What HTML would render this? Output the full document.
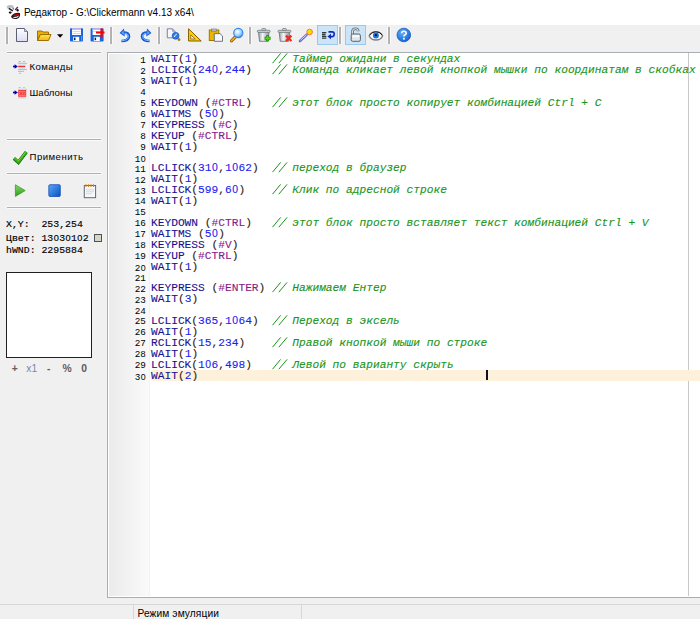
<!DOCTYPE html>
<html><head><meta charset="utf-8">
<style>
html,body{margin:0;padding:0}
body{width:700px;height:619px;overflow:hidden;background:#f0f0f0;position:relative;font-family:"Liberation Sans",sans-serif;}
.abs{position:absolute}
#title{position:absolute;left:0;top:0;width:700px;height:25px;background:#fff}
#ttext{position:absolute;left:24px;top:7.4px;font-size:10px;color:#000;white-space:nowrap;line-height:12px}
.sep{position:absolute;top:27px;width:2px;height:17px;background:#b2b2b2;box-shadow:1px 0 0 #fafafa,-1px 0 0 #fafafa}
.tb{position:absolute;top:25px;height:20px}
.pressed{background:#cce4f7;border:1px solid #99c9ef;box-sizing:border-box}
.hsep{position:absolute;left:7px;width:94px;height:1px;background:#b0b0b0;box-shadow:0 1px 0 #fafafa,0 -1px 0 #fafafa}
.lbl{position:absolute;font-size:9.6px;color:#000;white-space:nowrap;line-height:12px;letter-spacing:.3px}
.info{position:absolute;left:6px;font-family:"Liberation Mono",monospace;font-size:9.85px;color:#000;white-space:pre;line-height:12px;-webkit-text-stroke:.15px #000}
#editor{position:absolute;left:107px;top:52px;width:600px;height:546px;border:1px solid #a9adb4;border-right:0;box-sizing:border-box;background:#fff;overflow:hidden}
#gutter{position:absolute;left:109px;top:54px;width:40px;height:542px;background:linear-gradient(to right,#ebebeb,#fafafa)}
#gline{position:absolute;left:149px;top:54px;width:1px;height:542px;background:#f2f2f2}
#rmargin{position:absolute;left:688px;top:53px;width:1px;height:543px;background:#c8c8c8}
.ln{position:absolute;left:151.0px;-webkit-text-stroke:.1px currentColor;font-family:"Liberation Mono",monospace;font-size:11.217px;line-height:10.91px;height:10.91px;white-space:pre;color:#000}
.ln i{font-style:normal}
.ln i.c{color:#1a1090}
.ln i.p{color:#302010}
.ln i.n{color:#2020f0}
.ln i.k{color:#8a1a8a}
.ln b.z{font-weight:normal;display:inline-block;width:6.73px;text-align:center;font-family:"Liberation Sans",sans-serif;font-size:10.4px}
.ln i.tr{color:transparent;-webkit-text-stroke:0}
.ln i.m{color:#189418;font-style:italic}
.num{position:absolute;left:100px;width:45.9px;text-align:right;font-family:"Liberation Mono",monospace;font-size:9.3px;line-height:10.91px;color:#000;margin-top:1.3px}
.num b.z{font-weight:normal;display:inline-block;width:5.58px;text-align:center;font-family:"Liberation Sans",sans-serif;font-size:8.8px}
#hl{position:absolute;left:151px;top:370px;width:549px;height:11px;background:#fef1db}
#caret{position:absolute;left:486px;top:370px;width:2px;height:10px;background:#101020}
#status{position:absolute;left:0;top:604px;width:700px;height:15px;border-top:1px solid #d7d7d7;box-sizing:border-box;background:#f0f0f0}
#stdiv{position:absolute;left:133px;top:605px;width:1px;height:14px;background:#d7d7d7}
#sttext{position:absolute;left:137.5px;top:607.5px;font-size:10.2px;line-height:12px;white-space:nowrap;letter-spacing:.1px}
svg{position:absolute;overflow:visible}
.info b.z0{font-weight:normal;display:inline-block;width:5.91px;text-align:center;font-family:"Liberation Sans",sans-serif;font-size:9.2px}
.zl{position:absolute;top:363.2px;font-size:10.3px;line-height:11px;font-weight:bold;white-space:nowrap}
</style></head><body>
<div id="title"></div>
<div id="ttext">Редактор - G:\Clickermann v4.13 x64\</div>

<!-- toolbar separators -->
<div class="sep" style="left:6px"></div>
<div class="sep" style="left:110px"></div>
<div class="sep" style="left:158px"></div>
<div class="sep" style="left:249px"></div>
<div class="sep" style="left:339px"></div>
<div class="sep" style="left:388px"></div>
<div class="tb pressed" style="left:317px;width:21px"></div>
<div class="tb pressed" style="left:345px;width:21px"></div>

<!-- left panel -->
<div class="hsep" style="top:52px"></div>
<div class="lbl" style="left:29.6px;top:61px;letter-spacing:.38px">Команды</div>
<div class="lbl" style="left:29.4px;top:87px;letter-spacing:.08px">Шаблоны</div>
<div class="hsep" style="top:139px"></div>
<div class="lbl" style="left:29.5px;top:151px;letter-spacing:.48px">Применить</div>
<div class="hsep" style="top:173px"></div>
<div class="hsep" style="top:207px"></div>
<div class="info" style="top:219px">X,Y:  253,254</div>
<div class="info" style="top:232px">Цвет: 13<b class="z0">0</b>3<b class="z0">0</b>1<b class="z0">0</b>2</div>
<div class="info" style="top:245px">hWND: 2295884</div>
<div class="abs" style="left:94px;top:234px;width:8px;height:8px;border:1px solid #505050;box-sizing:border-box;background:#d8d4c8"></div>
<div class="abs" style="left:6px;top:272px;width:86px;height:86px;border:1px solid #202020;box-sizing:border-box;background:#fff"></div>
<div class="zl" style="left:11.8px;color:#606060">+</div>
<div class="zl" style="left:26.3px;color:#7888a8;font-weight:normal">x1</div>
<div class="zl" style="left:47px;color:#606060">-</div>
<div class="zl" style="left:62.6px;color:#606060">%</div>
<div class="zl" style="left:81.3px;color:#585858">0</div>

<!-- editor -->
<div id="editor"></div>
<div id="gutter"></div>
<div id="gline"></div>
<div id="rmargin"></div>
<div id="hl"></div>
<svg class="sl" style="left:272.14px;top:53.30px" width="18" height="12"><path d="M0.5 10.2 L8.6 0.4 M6.8 10.2 L15.1 0.4" stroke="#189418" stroke-width="1" fill="none"/></svg>
<div class="ln" style="top:54.30px"><i class="c">WAIT</i><i class="p">(</i><i class="n">1</i><i class="p">)</i>           <i class="m"><i class="tr">//</i> Таймер ожидани в секундах</i></div>
<div class="num" style="top:54.30px">1</div>
<svg class="sl" style="left:272.14px;top:64.21px" width="18" height="12"><path d="M0.5 10.2 L8.6 0.4 M6.8 10.2 L15.1 0.4" stroke="#189418" stroke-width="1" fill="none"/></svg>
<div class="ln" style="top:65.21px"><i class="c">LCLICK</i><i class="p">(</i><i class="n">24<b class="z">0</b></i><i class="p">,</i><i class="n">244</i><i class="p">)</i>   <i class="m"><i class="tr">//</i> Команда кликает левой кнопкой мышки по координатам в скобках</i></div>
<div class="num" style="top:65.21px">2</div>
<div class="ln" style="top:76.12px"><i class="c">WAIT</i><i class="p">(</i><i class="n">1</i><i class="p">)</i></div>
<div class="num" style="top:76.12px">3</div>
<div class="ln" style="top:87.03px"></div>
<div class="num" style="top:87.03px">4</div>
<svg class="sl" style="left:272.14px;top:96.94px" width="18" height="12"><path d="M0.5 10.2 L8.6 0.4 M6.8 10.2 L15.1 0.4" stroke="#189418" stroke-width="1" fill="none"/></svg>
<div class="ln" style="top:97.94px"><i class="c">KEYDOWN </i><i class="p">(</i><i class="k">#CTRL</i><i class="p">)</i>   <i class="m"><i class="tr">//</i> этот блок просто копирует комбинацией Ctrl + C</i></div>
<div class="num" style="top:97.94px">5</div>
<div class="ln" style="top:108.85px"><i class="c">WAITMS </i><i class="p">(</i><i class="n">5<b class="z">0</b></i><i class="p">)</i></div>
<div class="num" style="top:108.85px">6</div>
<div class="ln" style="top:119.76px"><i class="c">KEYPRESS </i><i class="p">(</i><i class="k">#C</i><i class="p">)</i></div>
<div class="num" style="top:119.76px">7</div>
<div class="ln" style="top:130.67px"><i class="c">KEYUP </i><i class="p">(</i><i class="k">#CTRL</i><i class="p">)</i></div>
<div class="num" style="top:130.67px">8</div>
<div class="ln" style="top:141.58px"><i class="c">WAIT</i><i class="p">(</i><i class="n">1</i><i class="p">)</i></div>
<div class="num" style="top:141.58px">9</div>
<div class="ln" style="top:152.49px"></div>
<div class="num" style="top:152.49px">1<b class="z">0</b></div>
<svg class="sl" style="left:272.14px;top:162.40px" width="18" height="12"><path d="M0.5 10.2 L8.6 0.4 M6.8 10.2 L15.1 0.4" stroke="#189418" stroke-width="1" fill="none"/></svg>
<div class="ln" style="top:163.40px"><i class="c">LCLICK</i><i class="p">(</i><i class="n">31<b class="z">0</b></i><i class="p">,</i><i class="n">1<b class="z">0</b>62</i><i class="p">)</i>  <i class="m"><i class="tr">//</i> переход в браузер</i></div>
<div class="num" style="top:163.40px">11</div>
<div class="ln" style="top:174.31px"><i class="c">WAIT</i><i class="p">(</i><i class="n">1</i><i class="p">)</i></div>
<div class="num" style="top:174.31px">12</div>
<svg class="sl" style="left:272.14px;top:184.22px" width="18" height="12"><path d="M0.5 10.2 L8.6 0.4 M6.8 10.2 L15.1 0.4" stroke="#189418" stroke-width="1" fill="none"/></svg>
<div class="ln" style="top:185.22px"><i class="c">LCLICK</i><i class="p">(</i><i class="n">599</i><i class="p">,</i><i class="n">6<b class="z">0</b></i><i class="p">)</i>    <i class="m"><i class="tr">//</i> Клик по адресной строке</i></div>
<div class="num" style="top:185.22px">13</div>
<div class="ln" style="top:196.13px"><i class="c">WAIT</i><i class="p">(</i><i class="n">1</i><i class="p">)</i></div>
<div class="num" style="top:196.13px">14</div>
<div class="ln" style="top:207.04px"></div>
<div class="num" style="top:207.04px">15</div>
<svg class="sl" style="left:272.14px;top:216.95px" width="18" height="12"><path d="M0.5 10.2 L8.6 0.4 M6.8 10.2 L15.1 0.4" stroke="#189418" stroke-width="1" fill="none"/></svg>
<div class="ln" style="top:217.95px"><i class="c">KEYDOWN </i><i class="p">(</i><i class="k">#CTRL</i><i class="p">)</i>   <i class="m"><i class="tr">//</i> этот блок просто вставляет текст комбинацией Ctrl + V</i></div>
<div class="num" style="top:217.95px">16</div>
<div class="ln" style="top:228.86px"><i class="c">WAITMS </i><i class="p">(</i><i class="n">5<b class="z">0</b></i><i class="p">)</i></div>
<div class="num" style="top:228.86px">17</div>
<div class="ln" style="top:239.77px"><i class="c">KEYPRESS </i><i class="p">(</i><i class="k">#V</i><i class="p">)</i></div>
<div class="num" style="top:239.77px">18</div>
<div class="ln" style="top:250.68px"><i class="c">KEYUP </i><i class="p">(</i><i class="k">#CTRL</i><i class="p">)</i></div>
<div class="num" style="top:250.68px">19</div>
<div class="ln" style="top:261.59px"><i class="c">WAIT</i><i class="p">(</i><i class="n">1</i><i class="p">)</i></div>
<div class="num" style="top:261.59px">2<b class="z">0</b></div>
<div class="ln" style="top:272.50px"></div>
<div class="num" style="top:272.50px">21</div>
<svg class="sl" style="left:272.14px;top:282.41px" width="18" height="12"><path d="M0.5 10.2 L8.6 0.4 M6.8 10.2 L15.1 0.4" stroke="#189418" stroke-width="1" fill="none"/></svg>
<div class="ln" style="top:283.41px"><i class="c">KEYPRESS </i><i class="p">(</i><i class="k">#ENTER</i><i class="p">)</i> <i class="m"><i class="tr">//</i> Нажимаем Ентер</i></div>
<div class="num" style="top:283.41px">22</div>
<div class="ln" style="top:294.32px"><i class="c">WAIT</i><i class="p">(</i><i class="n">3</i><i class="p">)</i></div>
<div class="num" style="top:294.32px">23</div>
<div class="ln" style="top:305.23px"></div>
<div class="num" style="top:305.23px">24</div>
<svg class="sl" style="left:272.14px;top:315.14px" width="18" height="12"><path d="M0.5 10.2 L8.6 0.4 M6.8 10.2 L15.1 0.4" stroke="#189418" stroke-width="1" fill="none"/></svg>
<div class="ln" style="top:316.14px"><i class="c">LCLICK</i><i class="p">(</i><i class="n">365</i><i class="p">,</i><i class="n">1<b class="z">0</b>64</i><i class="p">)</i>  <i class="m"><i class="tr">//</i> Переход в эксель</i></div>
<div class="num" style="top:316.14px">25</div>
<div class="ln" style="top:327.05px"><i class="c">WAIT</i><i class="p">(</i><i class="n">1</i><i class="p">)</i></div>
<div class="num" style="top:327.05px">26</div>
<svg class="sl" style="left:272.14px;top:336.96px" width="18" height="12"><path d="M0.5 10.2 L8.6 0.4 M6.8 10.2 L15.1 0.4" stroke="#189418" stroke-width="1" fill="none"/></svg>
<div class="ln" style="top:337.96px"><i class="c">RCLICK</i><i class="p">(</i><i class="n">15</i><i class="p">,</i><i class="n">234</i><i class="p">)</i>    <i class="m"><i class="tr">//</i> Правой кнопкой мыши по строке</i></div>
<div class="num" style="top:337.96px">27</div>
<div class="ln" style="top:348.87px"><i class="c">WAIT</i><i class="p">(</i><i class="n">1</i><i class="p">)</i></div>
<div class="num" style="top:348.87px">28</div>
<svg class="sl" style="left:272.14px;top:358.78px" width="18" height="12"><path d="M0.5 10.2 L8.6 0.4 M6.8 10.2 L15.1 0.4" stroke="#189418" stroke-width="1" fill="none"/></svg>
<div class="ln" style="top:359.78px"><i class="c">LCLICK</i><i class="p">(</i><i class="n">1<b class="z">0</b>6</i><i class="p">,</i><i class="n">498</i><i class="p">)</i>   <i class="m"><i class="tr">//</i> Левой по варианту скрыть</i></div>
<div class="num" style="top:359.78px">29</div>
<div class="ln" style="top:370.69px"><i class="c">WAIT</i><i class="p">(</i><i class="n">2</i><i class="p">)</i></div>
<div class="num" style="top:370.69px">3<b class="z">0</b></div>
<div id="caret"></div>

<svg width="700" height="619" viewBox="0 0 700 619" style="left:0;top:0;position:absolute">
<defs>
<linearGradient id="gdoc" x1="0" y1="0" x2="0" y2="1"><stop offset="0" stop-color="#ffffff"/><stop offset="1" stop-color="#dcdcf4"/></linearGradient>
<linearGradient id="gfold" x1="0" y1="0" x2="0" y2="1"><stop offset="0" stop-color="#ffe060"/><stop offset="1" stop-color="#f0b800"/></linearGradient>
<linearGradient id="gblue" x1="0" y1="0" x2="0" y2="1"><stop offset="0" stop-color="#4aa0f8"/><stop offset="1" stop-color="#0a4fc8"/></linearGradient>
<linearGradient id="gstop" x1="0" y1="0" x2="1" y2="1"><stop offset="0" stop-color="#5aaaf8"/><stop offset="1" stop-color="#0850c0"/></linearGradient>
<linearGradient id="gplay" x1="0" y1="0" x2="0" y2="1"><stop offset="0" stop-color="#8ad86a"/><stop offset="1" stop-color="#2a9a1a"/></linearGradient>
<linearGradient id="gtrash" x1="0" y1="0" x2="1" y2="0"><stop offset="0" stop-color="#9aa0a8"/><stop offset=".4" stop-color="#f4f6f8"/><stop offset="1" stop-color="#8a9098"/></linearGradient>
<radialGradient id="glens" cx=".4" cy=".35" r=".7"><stop offset="0" stop-color="#ffffff"/><stop offset=".6" stop-color="#9fd0ff"/><stop offset="1" stop-color="#2a80e8"/></radialGradient>
<radialGradient id="ghelp" cx=".4" cy=".35" r=".7"><stop offset="0" stop-color="#60b0ff"/><stop offset="1" stop-color="#1060d0"/></radialGradient>
</defs>

<!-- title icon -->
<g>
 <path d="M6.5 6.5 Q9 4.2 13.5 5.5 L13.2 8.2 Q10 7.2 7.8 9 Z" fill="#a8a8a8" opacity=".75"/>
 <path d="M8.8 8.4 L12.9 10.9" stroke="#202020" stroke-width="1.6" fill="none"/>
 <path d="M15.2 9.9 L17.8 7.1" stroke="#404040" stroke-width="1.4" fill="none"/>
 <ellipse cx="13.3" cy="8.6" rx=".8" ry="1.1" fill="#6a6ac8"/>
 <ellipse cx="10.2" cy="12.6" rx="1.5" ry="1.1" fill="#101010"/>
 <ellipse cx="17.6" cy="10.3" rx="1.1" ry="1.3" fill="#101010"/>
 <path d="M11 17 Q12 13.8 16 13 Q19.2 12.2 20 13.2 Q20.8 17.8 16.5 19 Q12.5 19.6 11 17 Z" fill="#1a1a1a"/>
 <path d="M12.6 16.3 Q13.8 14.4 16.5 14 Q18.8 13.6 19 14.4 Q18.6 15.6 16.5 16 Q14.3 16.5 12.6 16.3 Z" fill="#c80000"/>
 <path d="M12.8 17 Q16 17.2 19 15.4 Q18.6 17.6 15.8 18.1 Q13.6 18.2 12.8 17 Z" fill="#f4f4f4"/>
</g>

<!-- new doc -->
<path d="M16.5 28.5 H24.5 L27.5 31.5 V41.5 H16.5 Z" fill="url(#gdoc)" stroke="#5a6070" stroke-width="1"/>
<path d="M24.5 28.5 V31.5 H27.5" fill="#c8c8f0" stroke="#7070a0" stroke-width=".8"/>

<!-- open folder -->
<path d="M37.5 31 H42 L43 32 H48.5 V34.5 H40 L37.5 40.5 Z" fill="#e8b000" stroke="#a07000" stroke-width="1"/>
<path d="M37.5 40.5 L40.5 34.5 H51 L48.5 40.5 Z" fill="url(#gfold)" stroke="#a07000" stroke-width="1"/>
<!-- dropdown -->
<path d="M57 34.3 H63.2 L60.1 37.8 Z" fill="#000"/>

<!-- save -->
<g>
 <rect x="70" y="28.3" width="13" height="13.2" rx=".8" fill="#1a64d8"/>
 <rect x="72" y="28.6" width="9" height="6.4" fill="#ffffff"/>
 <rect x="72" y="28.6" width="9" height="1.4" fill="#e6a8f4"/>
 <rect x="72.5" y="31.2" width="8" height=".7" fill="#c8c0f0"/>
 <rect x="72.5" y="33" width="8" height=".7" fill="#c8c0f0"/>
 <rect x="73.2" y="36.8" width="6" height="4.2" fill="#ffffff"/>
 <rect x="74" y="37.6" width="1.5" height="2.6" fill="#002080"/>
 <rect x="81.2" y="35.8" width="1" height="5" fill="#60a0f0"/>
</g>
<!-- save all -->
<g>
 <rect x="90.6" y="28.3" width="13" height="13.2" rx=".8" fill="#1a64d8"/>
 <rect x="92.6" y="28.6" width="9" height="6.4" fill="#ffffff"/>
 <rect x="92.6" y="28.6" width="9" height="1.4" fill="#e6a8f4"/>
 <rect x="93.1" y="31.2" width="8" height=".7" fill="#c8c0f0"/>
 <rect x="93.8" y="36.8" width="6" height="4.2" fill="#ffffff"/>
 <rect x="94.6" y="37.6" width="1.5" height="2.6" fill="#002080"/>
 <path d="M101.5 28.5 V37.5 M96 32.5 H104.5" stroke="#ff0000" stroke-width="2.2"/>
</g>

<!-- undo -->
<path d="M121.5 41 Q128.5 41 129 36.5 Q129 32.5 123.5 32.5" fill="none" stroke="#1458d8" stroke-width="2.6"/>
<path d="M121.8 40.6 Q128 40.6 128.4 36.5 Q128.4 33.2 124 33.2" fill="none" stroke="#78c0ff" stroke-width="1"/>
<path d="M124 28.6 L119.6 33 L124.8 36.4 Z" fill="#1458d8"/>
<path d="M123.6 30.2 L121.2 33 L124 34.8 Z" fill="#5aa8f8"/>
<!-- redo -->
<path d="M149.5 41 Q142.5 41 142 36.5 Q142 32.5 147.5 32.5" fill="none" stroke="#1458d8" stroke-width="2.6"/>
<path d="M149.2 40.6 Q143 40.6 142.6 36.5 Q142.6 33.2 147 33.2" fill="none" stroke="#78c0ff" stroke-width="1"/>
<path d="M147 28.6 L151.4 33 L146.2 36.4 Z" fill="#1458d8"/>
<path d="M147.4 30.2 L149.8 33 L147 34.8 Z" fill="#5aa8f8"/>

<!-- find in doc -->
<path d="M167.3 28.8 H172.5 L175 31.3 V37.8 H167.3 Z" fill="#f6f6fc" stroke="#707888" stroke-width=".9"/>
<path d="M172.5 28.8 V31.3 H175" fill="#b8b0e8" stroke="#8080b0" stroke-width=".6"/>
<circle cx="179" cy="39.6" r="1.1" fill="#d08000" stroke="#804800" stroke-width=".5"/>
<circle cx="175.6" cy="35.8" r="3.4" fill="#2a7ee8" stroke="#1458c8" stroke-width=".8"/>
<path d="M174.2 37 Q175 34.6 176.8 34.2" stroke="#e8f4ff" stroke-width="1" fill="none"/>

<!-- triangle ruler -->
<path d="M188.6 28.8 L201.2 41 H188.6 Z" fill="#ffd400" stroke="#805800" stroke-width="1"/>
<path d="M190.8 34.8 L195.2 39 H190.8 Z" fill="#ffffff" stroke="#805800" stroke-width=".8"/>

<!-- paste -->
<rect x="209.3" y="30" width="9.5" height="10.5" fill="#e8b800" stroke="#a07800" stroke-width="1"/>
<rect x="211.5" y="29" width="5" height="2.2" fill="#c0c0c0" stroke="#707070" stroke-width=".6"/>
<path d="M214.3 33.6 H220 L222.5 36 V41.3 H214.3 Z" fill="#f8f8ff" stroke="#606878" stroke-width=".9"/>

<!-- magnifier -->
<path d="M231.5 40.8 L235.3 37" stroke="#a06800" stroke-width="3.2" stroke-linecap="round"/>
<path d="M231.5 40.8 L235.3 37" stroke="#f0b030" stroke-width="1.4" stroke-linecap="round"/>
<circle cx="238.3" cy="33" r="4.6" fill="url(#glens)" stroke="#2a88f0" stroke-width="1.1"/>

<!-- trash + -->
<g>
 <path d="M258.5 32 H269 L268 41.3 H259.5 Z" fill="url(#gtrash)" stroke="#707880" stroke-width=".9"/>
 <rect x="257.3" y="30.3" width="12.8" height="2" rx=".8" fill="#d8dce0" stroke="#707880" stroke-width=".8"/>
 <rect x="261.8" y="28.5" width="3.8" height="2" rx=".6" fill="#c8ccd0" stroke="#707880" stroke-width=".7"/>
 <path d="M267.6 35.3 V41.3 M264.6 38.3 H270.6" stroke="#208a10" stroke-width="3"/>
 <path d="M267.6 36 V40.6 M265.3 38.3 H269.9" stroke="#60d020" stroke-width="1.4"/>
</g>
<!-- trash x -->
<g>
 <path d="M279.2 32 H289.7 L288.7 41.3 H280.2 Z" fill="url(#gtrash)" stroke="#707880" stroke-width=".9"/>
 <rect x="278" y="30.3" width="12.8" height="2" rx=".8" fill="#d8dce0" stroke="#707880" stroke-width=".8"/>
 <rect x="282.5" y="28.5" width="3.8" height="2" rx=".6" fill="#c8ccd0" stroke="#707880" stroke-width=".7"/>
 <path d="M286 35.6 L291.4 41 M291.4 35.6 L286 41" stroke="#ff2010" stroke-width="2.2"/>
</g>

<!-- wand -->
<path d="M300 41 L307 34.4" stroke="#6a6ad8" stroke-width="2.6" stroke-linecap="round"/>
<path d="M300.4 40.3 L306.6 34.6" stroke="#e8e8ff" stroke-width=".8"/>
<circle cx="309.6" cy="32" r="2.8" fill="#ffd800" stroke="#f08040" stroke-width="1"/>

<!-- pressed wrap icon -->
<path d="M322 32.6 H326.3 M322 34.5 H325.5 M322 36.4 H326.3 M322 38.2 H326.3" stroke="#303840" stroke-width="1.3"/>
<path d="M328.5 31.9 H332 Q334.2 31.9 334.2 34 V34.3 Q334.2 36.6 332 36.6 H330" fill="none" stroke="#1028b8" stroke-width="1.6"/>
<path d="M331 33.8 L327.4 36.6 L331 39.3 Z" fill="#1028b8"/>

<!-- lock -->
<path d="M352.6 35 V31.6 Q352.6 28.8 355.4 28.8 Q358.2 28.8 358.2 31.3" fill="none" stroke="#5a6068" stroke-width="2.6"/>
<path d="M352.6 35 V31.6 Q352.6 28.8 355.4 28.8 Q358.2 28.8 358.2 31.3" fill="none" stroke="#e0e4ea" stroke-width="1.1"/>
<rect x="351.2" y="34" width="9.2" height="7.3" rx="1.5" fill="#e2e6ec" stroke="#5a6068" stroke-width="1"/>
<rect x="352.5" y="35.2" width="6.6" height="2" fill="#f8fafc"/>

<!-- eye -->
<path d="M369.2 36 Q371 31.8 375.9 31.8 Q380.8 31.8 382.6 36 Q380.8 40 375.9 40 Q371 40 369.2 36 Z" fill="#ffffff" stroke="#808080" stroke-width="1.4"/>
<path d="M369.6 35.2 Q371.5 31.8 375.9 31.8 Q380.3 31.8 382.2 35.2" fill="none" stroke="#202020" stroke-width="1"/>
<circle cx="375.9" cy="35.4" r="3" fill="#1a74e8"/>
<circle cx="375.9" cy="35.2" r="1.1" fill="#000820"/>

<!-- help -->
<circle cx="403.8" cy="35" r="6.8" fill="url(#ghelp)" stroke="#1a5ab8" stroke-width=".8"/>
<path d="M401.6 33.3 Q401.6 31.2 403.9 31.2 Q406.2 31.2 406.2 33.2 Q406.2 34.4 404.8 35 Q403.9 35.5 403.9 36.6" fill="none" stroke="#fff" stroke-width="1.6"/>
<rect x="403" y="37.8" width="1.8" height="1.8" fill="#fff"/>

<!-- Команды icon -->
<g>
 <path d="M13 66.5 H15.5" stroke="#0000b0" stroke-width="1.6"/>
 <path d="M14.6 64.2 L17.9 66.5 L14.6 68.8 Z" fill="#0000b0"/>
 <path d="M18.5 61.5 H21 M23 61.5 H25 M18 63.3 H27 M18 69.6 H27 M18 71.4 H24 M19 73.3 H21" stroke="#a8acb8" stroke-width=".8"/>
 <path d="M18.5 65 H26 M18.5 68.2 H25" stroke="#a8dcec" stroke-width=".7"/>
 <rect x="18.2" y="65.8" width="7" height="1.4" fill="#f03030"/>
</g>
<!-- Шаблоны icon -->
<g>
 <path d="M13 92.5 H15.5" stroke="#0000b0" stroke-width="1.6"/>
 <path d="M14.6 90.2 L17.9 92.5 L14.6 94.8 Z" fill="#0000b0"/>
 <path d="M18.5 87.5 H21 M23 87.5 H25 M18 89.3 H27 M18 97.8 H26" stroke="#a0c8e0" stroke-width=".8"/>
 <rect x="18.2" y="90" width="8" height="6.8" fill="#f04040"/>
 <path d="M19 91.8 H25.5 M19 93.6 L20 93.6 M22 93.6 H23 M24.5 93.6 H25.5 M19 95.3 H25.5" stroke="#ffb0b0" stroke-width=".6"/>
</g>

<!-- check -->
<path d="M14 158.3 L18.4 162.3 L26.3 152" fill="none" stroke="#0a6a0a" stroke-width="3.6" stroke-linejoin="miter"/>
<path d="M14 158.3 L18.4 162.3 L26.3 152" fill="none" stroke="#30b020" stroke-width="2.2"/>
<path d="M15 157.6 L18.4 160.8 L25.8 151.7" fill="none" stroke="#c8e820" stroke-width=".7"/>

<!-- play -->
<path d="M15.4 184.8 L25.2 190.6 L15.4 196.4 Z" fill="url(#gplay)" stroke="#3a9a28" stroke-width=".8" stroke-linejoin="round"/>
<!-- stop -->
<rect x="48.8" y="184.7" width="11.5" height="11.8" rx="1.2" fill="url(#gstop)" stroke="#1050b8" stroke-width=".8"/>
<!-- notepad -->
<rect x="84.3" y="185.5" width="11.3" height="12.2" fill="#f8f8fc" stroke="#606870" stroke-width="1"/>
<path d="M86 184.3 V187 M88.5 184.3 V187 M91 184.3 V187 M93.5 184.3 V187" stroke="#d08020" stroke-width="1.1"/>
<path d="M86 189.8 H94 M86 191.8 H94 M86 193.8 H92" stroke="#c0c8d8" stroke-width=".7"/>
</svg>

<div id="status"></div>
<div id="stdiv"></div>
<div id="stdiv2" style="position:absolute;left:301px;top:605px;width:1px;height:14px;background:#d7d7d7"></div>
<div id="sttext">Режим эмуляции</div>
</body></html>
